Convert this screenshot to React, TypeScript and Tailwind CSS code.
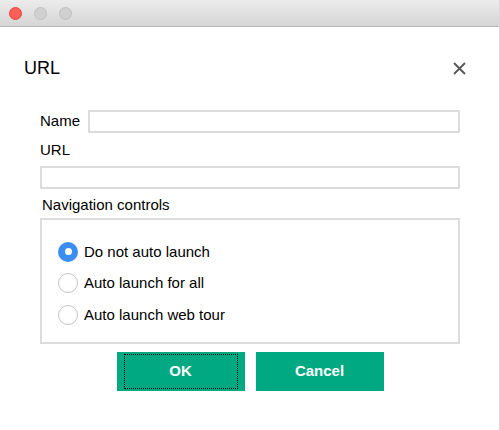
import React from 'react'

const Radio = ({ checked, label }: { checked?: boolean; label: string }) => (
  <label className="flex items-center h-[31.5px] gap-[6px]">
    {checked ? (
      <span className="w-[20px] h-[20px] rounded-full bg-[#3b8ef0] flex items-center justify-center">
        <span className="w-[7px] h-[7px] rounded-full bg-white" />
      </span>
    ) : (
      <span className="w-[20px] h-[20px] rounded-full border border-[#c4c4c4] bg-white" />
    )}
    <span className="text-[15px] text-black">{label}</span>
  </label>
)

const App = () => {
  return (
    <div className="w-[500px] h-[430px] bg-white border-r border-[#d8d8d8] flex flex-col" style={{ fontFamily: '"Liberation Sans", Arial, sans-serif' }}>
      <div className="h-[27px] bg-gradient-to-b from-[#ececec] to-[#d5d5d5] border-b border-[#b4b4b4] flex items-center pl-[9px] gap-[12px]">
        <span className="w-[13px] h-[13px] rounded-full bg-[#fe5f57] border border-[#e2463f]" />
        <span className="w-[13px] h-[13px] rounded-full bg-[#d0d0d0] border border-[#c0c0c0]" />
        <span className="w-[13px] h-[13px] rounded-full bg-[#d0d0d0] border border-[#c0c0c0]" />
      </div>

      <div className="flex items-center justify-between pl-[24px] pr-[33px] pt-[28px]">
        <span className="text-[18px] text-black">URL</span>
        <svg width="13" height="13" viewBox="0 0 13 13">
          <path d="M1 1 L12 12 M12 1 L1 12" stroke="#555" strokeWidth="1.8" />
        </svg>
      </div>

      <div className="ml-[40px] w-[420px] mt-[28px] flex flex-col">
        <div className="flex items-center gap-[8px]">
          <span className="text-[15px] text-black">Name</span>
          <div className="flex-1 h-[23px] border-2 border-[#dcdcdc]" />
        </div>
        <span className="text-[15px] text-black mt-[6px]">URL</span>
        <div className="h-[23px] border-2 border-[#dcdcdc] mt-[4px]" />
        <span className="text-[15px] text-black mt-[5px] ml-[2px]">Navigation controls</span>
        <div className="mt-[2px] h-[126px] border-2 border-[#dcdcdc] pl-[16px] pt-[16px]">
          <Radio checked label="Do not auto launch" />
          <Radio label="Auto launch for all" />
          <Radio label="Auto launch web tour" />
        </div>
      </div>

      <div className="flex justify-center gap-[11px] mt-[8px] pl-[1px]">
        <button className="w-[128px] h-[39px] bg-[#00a981] text-white font-bold text-[15px] p-[2px_7px]">
          <span className="w-full h-full border border-dotted border-black flex items-center justify-center">OK</span>
        </button>
        <button className="w-[128px] h-[39px] bg-[#00a981] text-white font-bold text-[15px]">Cancel</button>
      </div>
    </div>
  )
}

export default App
